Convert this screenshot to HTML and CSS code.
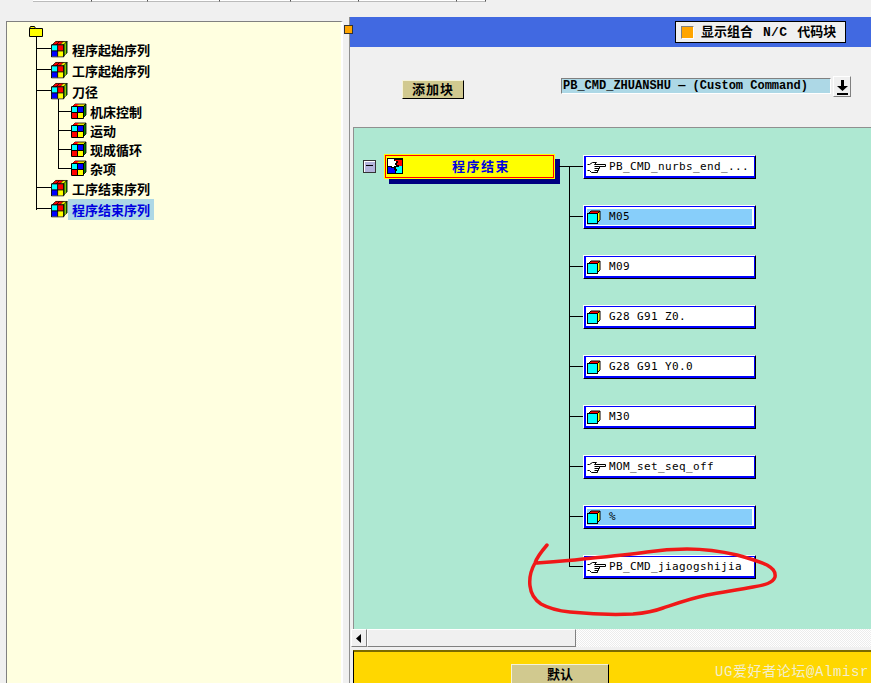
FILE: index.html
```html
<!DOCTYPE html>
<html lang="zh">
<head>
<meta charset="utf-8">
<title>程序结束序列</title>
<link rel="stylesheet" href="styles.css">
</head>
<body>
<svg class="defs" width="0" height="0" aria-hidden="true">
  <symbol id="cube-big" viewBox="0 0 18 18">
    <path d="M1 5 5 1h12l-4 4z" fill="#e8e800" stroke="#000" stroke-width=".8"/>
    <path d="M5 1h4L5 5H1zM9 1h4l-4 4H5z" fill="#f00" stroke="#000" stroke-width=".5"/>
    <path d="M13 5l4-4v12l-4 4z" fill="#008000" stroke="#000" stroke-width=".8"/>
    <path d="M15 3v12" stroke="#e8e800"/>
    <rect x="1" y="5" width="6" height="6" fill="#0ff"/><rect x="7" y="5" width="6" height="6" fill="#f00"/>
    <rect x="1" y="11" width="6" height="6" fill="#00f"/><rect x="7" y="11" width="6" height="6" fill="#ff0"/>
    <path d="M.5 4.500h13v13H.5zM7 5v12M1 11h12" fill="none" stroke="#000"/>
  </symbol>
  <symbol id="cube-small" viewBox="0 0 16 16">
    <path d="M1 4 4 1h11l-3 3z" fill="#e8e800" stroke="#000" stroke-width=".8"/>
    <path d="M4 1h4L5 4H1z" fill="#f00"/>
    <path d="M12 4l3-3v11l-3 3z" fill="#008000" stroke="#000" stroke-width=".8"/>
    <rect x="1" y="4" width="5.500" height="5.500" fill="#0ff"/><rect x="6.500" y="4" width="5.500" height="5.500" fill="#00f"/>
    <rect x="1" y="9.500" width="5.500" height="5.500" fill="#f00"/><rect x="6.500" y="9.500" width="5.500" height="5.500" fill="#ff0"/>
    <path d="M.5 3.500h12v12H.5zM6.500 4v11M1 9.500h11" fill="none" stroke="#000"/>
  </symbol>
  <symbol id="cube-op" viewBox="0 0 14 14">
    <path d="M1 4 4 1h9l-3 3z" fill="#f00" stroke="#000"/>
    <path d="M10 4l3-3v9l-3 3z" fill="#ff0" stroke="#000"/>
    <rect x=".5" y="3.500" width="10" height="10" fill="#0ff" stroke="#000"/>
  </symbol>
  <symbol id="hand" viewBox="0 0 19 13">
    <path d="M2.500 3.500 5.500 1.500H9.500L7.500 3.500H18.500V5.500H12.500V7.500H11.500V9.500H10.500V11.500H4.500L2.500 9.500Z" fill="#fff"/>
    <path d="M.5 3.500H2.500L5.500 1.500H9.500L7.500 3.500H18.500V5.500H12.500M7.500 5.500H12.500V7.500H7.500M11.500 7.500V9.500H7.500M10.500 9.500V11.500H4.500L2.500 9.500H.5" fill="none" stroke="#000"/>
  </symbol>
</svg>

<div class="top-strip">
  <span class="tab tab-a"></span><span class="tab tab-b"></span><span class="tab tab-c"></span><span class="tab tab-d"></span><span class="tab tab-e"></span><span class="tab tab-f"></span><span class="tab tab-g"></span>
</div>

<div class="app">
  <aside class="tree-panel">
    <div class="folder-row">
      <svg class="folder" width="14" height="11" viewBox="0 0 14 11"><path d="M.5 10.500v-8l1-2h4l1 2h7v8z" fill="#ff0" stroke="#000"/><path d="M.5 2.500h6" stroke="#000"/></svg>
    </div>
    <ul class="tree">
      <li class="row"><svg class="ic-big" viewBox="0 0 18 18"><use href="#cube-big"/></svg><span class="label">程序起始序列</span></li>
      <li class="row"><svg class="ic-big" viewBox="0 0 18 18"><use href="#cube-big"/></svg><span class="label">工序起始序列</span></li>
      <li class="row"><svg class="ic-big" viewBox="0 0 18 18"><use href="#cube-big"/></svg><span class="label">刀径</span></li>
      <li class="nest">
        <ul class="subtree">
          <li class="subrow"><svg class="ic-small"><use href="#cube-small"/></svg><span class="label">机床控制</span></li>
          <li class="subrow"><svg class="ic-small"><use href="#cube-small"/></svg><span class="label">运动</span></li>
          <li class="subrow"><svg class="ic-small"><use href="#cube-small"/></svg><span class="label">现成循环</span></li>
          <li class="subrow"><svg class="ic-small"><use href="#cube-small"/></svg><span class="label">杂项</span></li>
        </ul>
      </li>
      <li class="row"><svg class="ic-big" viewBox="0 0 18 18"><use href="#cube-big"/></svg><span class="label">工序结束序列</span></li>
      <li class="row"><svg class="ic-big" viewBox="0 0 18 18"><use href="#cube-big"/></svg><span class="label selected">程序结束序列</span></li>
    </ul>
  </aside>

  <main class="editor">
    <span class="sash"></span>
    <header class="title-bar">
      <div class="toggle"><span class="check"></span><span class="toggle-text">显示组合<span class="mono">N/C</span>代码块</span></div>
    </header>

    <section class="toolbar">
      <button class="btn add-btn">添加块</button>
      <div class="combo">
        <div class="combo-value">PB_CMD_ZHUANSHU — (Custom Command)</div>
        <button class="combo-arrow"><svg width="13" height="16" viewBox="0 0 13 16"><path d="M5 1h3v6h4L6.500 12 1 7h4z M1 14h11v2H1z" fill="#000"/></svg></button>
      </div>
    </section>

    <section class="canvas">
      <div class="root-group">
        <span class="collapse"></span>
        <div class="root-node">
          <svg class="puzzle" width="16" height="16" viewBox="0 0 16 16"><rect width="16" height="16" fill="#000"/><path d="M1 1h6v2h2v2H8v2h1v1H7v1H5V8H1z" fill="#fff"/><path d="M8 2h7v6h-3V7h-2V5h1V3H8z" fill="#f00"/><path d="M1 9h3v1h3v2h1v3H1z" fill="#00f"/><path d="M9 9h3V8h3v7H9v-2h1v-2H9z" fill="#0ff"/></svg>
          <span class="root-title">程序结束</span>
        </div>
      </div>
      <div class="blocks">
        <div class="block"><svg class="ic-hand"><use href="#hand"/></svg><span>PB_CMD_nurbs_end_...</span></div>
        <div class="block is-fixed"><svg class="ic-cube"><use href="#cube-op"/></svg><span>M05</span></div>
        <div class="block"><svg class="ic-cube"><use href="#cube-op"/></svg><span>M09</span></div>
        <div class="block"><svg class="ic-cube"><use href="#cube-op"/></svg><span>G28 G91 Z0.</span></div>
        <div class="block"><svg class="ic-cube"><use href="#cube-op"/></svg><span>G28 G91 Y0.0</span></div>
        <div class="block"><svg class="ic-cube"><use href="#cube-op"/></svg><span>M30</span></div>
        <div class="block"><svg class="ic-hand"><use href="#hand"/></svg><span>MOM_set_seq_off</span></div>
        <div class="block is-fixed"><svg class="ic-cube"><use href="#cube-op"/></svg><span>%</span></div>
        <div class="block"><svg class="ic-hand"><use href="#hand"/></svg><span>PB_CMD_jiagogshijia</span></div>
      </div>
    </section>

    <div class="scrollbar">
      <span class="scroll-arrow"><svg width="6" height="9" viewBox="0 0 6 9"><path d="M5 0v9L0 4.500z" fill="#000"/></svg></span>
      <span class="scroll-thumb"></span>
    </div>

    <footer class="actions">
      <button class="btn default-btn">默认</button>
    </footer>
  </main>
</div>

<svg class="scribble" width="871" height="683" viewBox="0 0 871 683" aria-hidden="true">
  <path d="M547 545 C541 552 537 557 535 563 C531 570 529 578 530 586 C531 595 535 600 541 604 C550 609 560 611 570 612 C590 614 612 615 633 614 C645 613 655 611 663 608 C678 603 692 598 707 595 C722 592 738 590 753 587 C765 585 773 583 775 577 C776 571 772 568 767 565 C758 561 748 558 737 555 C720 551 704 549 687 549 C673 549 660 550 647 552 C626 555 604 557 583 559 C567 561 550 562 535 563" fill="none" stroke="#f01818" stroke-width="3.500" stroke-linecap="round"/>
</svg>
<div class="watermark">UG爱好者论坛@Almisr</div>
</body>
</html>
```

FILE: styles.css
```css
* { box-sizing: border-box; }
html, body { margin: 0; height: 683px; overflow: hidden; }
body {
  position: relative;
  background: #f0f0f0;
  font-family: "Noto Sans CJK SC", "Liberation Sans", sans-serif;
  color: #000;
}
ul { list-style: none; margin: 0; padding: 0; }
.defs { position: absolute; }

.top-strip { display: flex; height: 4px; padding-left: 33px; }
.tab { height: 2px; background: #fff; border-right: 1px solid #555; border-bottom: 1px solid #bbb; }
.tab-a { width: 59px; }
.tab-b { width: 56px; }
.tab-c { width: 72px; }
.tab-d { width: 71px; }
.tab-e { width: 68px; }
.tab-f { width: 98px; }
.tab-g { width: 29px; }

.app { display: flex; height: 679px; }

.tree-panel {
  width: 337px;
  margin: 17px 0 0 6px;
  background: #ffffe0;
  border-top: 1px solid #808080;
  border-left: 1px solid #808080;
  border-right: 2px solid #fff;
  padding: 4px 0 0 22px;
}
.folder-row { height: 13px; line-height: 0; }
.tree { position: relative; padding-left: 14px; margin-left: 7px; }
.tree::before {
  content: "";
  position: absolute;
  left: 0; top: -3px; bottom: 10px;
  border-left: 1px solid #000;
}
.row, .subrow { display: flex; align-items: center; position: relative; }
.row { height: 21px; }
.subrow { height: 19px; }
.row::before, .subrow::before {
  content: "";
  position: absolute;
  top: 9px;
  border-top: 1px solid #000;
}
.row::before { left: -14px; width: 15px; }
.subrow::before { left: -13px; width: 13px; }
.subtree { position: relative; margin-left: 8px; padding-left: 13px; }
.subtree::before {
  content: "";
  position: absolute;
  left: 0; top: -3px; bottom: 9px;
  border-left: 1px solid #000;
}
.ic-big { width: 17px; height: 18px; flex: none; margin-left: 1px; margin-top: -2px; }
.ic-small { width: 16px; height: 16px; flex: none; margin-right: 3px; margin-top: -1px; }
.label { font-size: 13px; font-weight: 700; line-height: 21px; white-space: nowrap; padding: 0 4px; }
.subrow .label { padding: 0; line-height: 19px; }
.selected { background: #add8e6; color: #0000e0; }

.editor { position: relative; flex: 1; min-width: 0; margin: 13px 0 0 6px; border-left: 1px solid #909090; display: flex; flex-direction: column; }
.sash { position: absolute; left: -6px; top: 8px; width: 9px; height: 9px; background: #ffa500; border: 1px solid #333; }

.title-bar { height: 30px; flex: none; background: #4169e1; display: flex; justify-content: flex-end; align-items: flex-start; padding: 4px 25px 0 0; }
.toggle { height: 22px; width: 171px; background: #f0f0f0; border: 1px solid #000; display: flex; align-items: center; gap: 7px; padding-left: 5px; font-size: 13px; font-weight: 700; white-space: pre; }
.toggle-text { padding-bottom: 3px; }
.mono { font-family: "Liberation Mono", monospace; margin: 0 10px; letter-spacing: .3px; }
.check { width: 13px; height: 13px; background: #ffa500; border: 1px solid; border-color: #808080 #fff #fff #808080; flex: none; }

.toolbar { height: 80px; flex: none; display: flex; padding: 31px 20px 0 52px; align-items: flex-start; }
.btn { font-family: "Noto Sans CJK SC", sans-serif; font-weight: 700; background: #d1c98f; padding: 0; color: #000; }
.add-btn { width: 63px; height: 19px; font-size: 13px; line-height: 13px; padding-bottom: 3px; margin-top: 2px; border: 1px solid; border-color: #f5f2d8 #000 #000 #f5f2d8; letter-spacing: 1px; }
.combo { display: flex; margin-left: 97px; }
.combo-value { width: 270px; height: 16px; background: #add8e6; border: 1px solid; border-color: #808080 #fff #fff #808080; font: 700 12px/15px "Liberation Mono", monospace; padding-left: 1px; white-space: pre; overflow: hidden; }
.combo-arrow { width: 18px; height: 21px; margin: -2px 0 0 2px; background: #f0f0f0; border: 1px solid; border-color: #fff #808080 #808080 #fff; padding: 0; line-height: 0; }

.canvas { height: 502px; flex: none; margin-left: 3px; background: #aee8d2; border: 1px solid #909090; border-bottom: 0; border-right: 0; display: flex; padding: 26px 0 0 9px; position: relative; }
.root-group { display: flex; align-items: flex-start; width: 220px; flex: none; }
.collapse { width: 13px; height: 13px; margin-top: 6px; background: #b4b4dc; border: 1px solid #333; box-shadow: inset 1px 1px #fff; position: relative; }
.collapse::after { content: ""; position: absolute; left: 2px; right: 2px; top: 4px; border-top: 1px solid #000; }
.root-node { width: 171px; height: 25px; margin-left: 8px; background: #ff0; border: 1px solid #ff0; box-shadow: inset 0 0 0 1px #f00, 5px 5px 0 #000080; display: flex; align-items: center; padding-left: 2px; color: #0000e0; font-weight: 700; font-size: 13px; position: relative; }
.puzzle { flex: none; margin-bottom: 1px; }
.root-title { flex: 1; text-align: center; letter-spacing: 1.500px; padding: 0 0 3px 5px; }

.blocks { position: relative; display: flex; flex-direction: column; gap: 26px; padding-top: 1px; }
.blocks::before { content: ""; position: absolute; left: -14px; top: 12px; height: 400px; border-left: 1px solid #000; }
.blocks::after { content: ""; position: absolute; left: -24px; top: 12px; width: 24px; border-top: 1px solid #000; }
.block { position: relative; width: 173px; height: 24px; background: #fff; border: 1px solid; border-color: #fff #000 #000 #fff; box-shadow: inset 0 0 0 1px #00f, inset 1px -1px 0 1px #00f; display: flex; align-items: center; gap: 4px; padding-left: 3px; font: 11px "DejaVu Sans Mono", monospace; letter-spacing: .38px; color: #000; white-space: pre; }
.block span { padding-bottom: 2px; }
.block::before { content: ""; position: absolute; left: -15px; width: 14px; top: 10px; border-top: 1px solid #000; }
.block.is-fixed { background: #87cefa; box-shadow: inset 0 0 0 1px #00f, inset 1px -1px 0 1px #00f, inset 0 0 0 3px #fff; }
.block .ic-cube { width: 14px; height: 14px; flex: none; margin: 0 4px 0 0; }
.block .ic-hand { width: 19px; height: 13px; flex: none; margin-right: -1px; }

.scrollbar { height: 18px; flex: none; margin-left: 1px; display: flex; background: repeating-conic-gradient(#fff 0 25%, #ececec 0 50%) 0 0 / 2px 2px; }
.scroll-arrow { width: 16px; background: #f0f0f0; border: 1px solid; border-color: #fff #808080 #808080 #fff; display: flex; align-items: center; justify-content: center; }
.scroll-thumb { width: 209px; background: #f0f0f0; border: 1px solid; border-color: #fff #808080 #808080 #fff; }

.actions { flex: 1; margin: 3px 0 0 3px; background: #ffd700; border: 1px solid #000; border-top: 2px solid #7a6a00; border-right: 0; border-bottom: 0; padding: 12px 0 0 157px; }
.default-btn { width: 98px; height: 24px; font-size: 13px; line-height: 13px; padding-bottom: 6px; letter-spacing: 0; border: 1px solid; border-color: #f5f2d8 #000 #000 #f5f2d8; vertical-align: top; }

.scribble { position: absolute; left: 0; top: 0; pointer-events: none; }
.watermark { position: absolute; left: 715px; top: 662px; font: 14px/20px "Liberation Mono", "Noto Sans CJK SC", monospace; color: #f2eecf; letter-spacing: .6px; white-space: nowrap; }
```
